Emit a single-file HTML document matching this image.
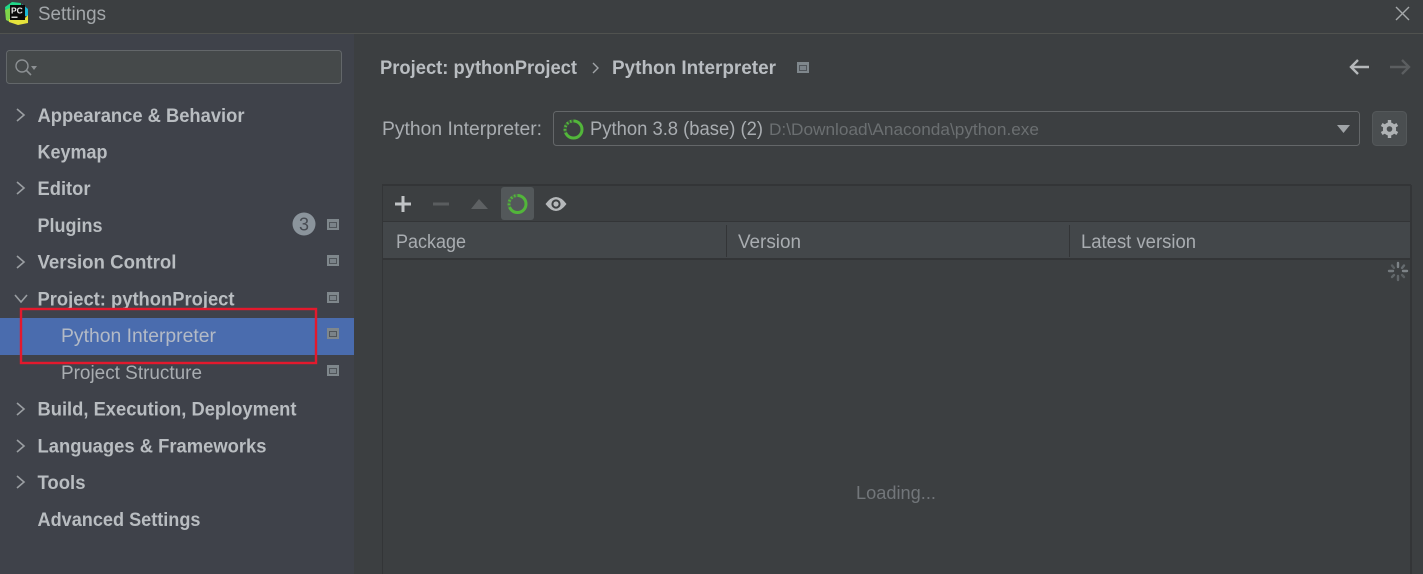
<!DOCTYPE html>
<html><head><meta charset="utf-8"><title>Settings</title>
<style>
html,body{margin:0;padding:0;background:#3c3f41;overflow:hidden}
svg{display:block;filter:blur(.35px)}
text{font-family:"Liberation Sans",sans-serif}
.b{font-weight:700;font-size:19px;fill:#b9bdc1}
.r{font-size:19px;fill:#a9adb1}
</style></head><body>
<svg width="1423" height="574" viewBox="0 0 1423 574" xmlns="http://www.w3.org/2000/svg">
<defs>
<g id="sq"><rect x="0" y="-1" width="12" height="11" fill="#7f878c"/><rect x="2" y="2" width="8" height="6" fill="#50555a"/><rect x="3" y="3" width="6" height="4" fill="#7a8288"/></g>
</defs>
<rect width="1423" height="574" fill="#3c3f41"/>
<rect x="0" y="33" width="1423" height="1" fill="#50524f"/>
<rect x="0" y="34" width="354" height="540" fill="#3f424a"/>
<!-- logo -->
<g>
<path d="M5 7 L12 2 L21 3 L21 8 L10 12 L10 20 L6 19 Z" fill="#21d789"/>
<path d="M5 10 L10 8 L10 22 L6 20 Z" fill="#7fd44a"/>
<path d="M22 4 L28 9 L28 16 L24 16 Z" fill="#19b8d8"/>
<path d="M9 19 L25 18 L28 15 L28 23 L18 25 L9 22 Z" fill="#e6e33c"/>
<rect x="10" y="5" width="15" height="15" fill="#0b0b0b"/>
<text x="11" y="13.5" style="font-size:8.5px;font-weight:700;fill:#e8e8e8">PC</text>
<rect x="11.5" y="16.5" width="6" height="1.5" fill="#d0d0d0"/>
</g>
<text x="38" y="20" textLength="68" lengthAdjust="spacingAndGlyphs" style="font-size:19px;fill:#a3a7aa">Settings</text>
<path d="M1396 7 L1409 20 M1409 7 L1396 20" stroke="#a5a8aa" stroke-width="1.4" fill="none"/>
<!-- search -->
<rect x="6.5" y="50.5" width="335" height="33" rx="3" fill="#45494a" stroke="#63676a"/>
<circle cx="22" cy="66" r="6" fill="none" stroke="#8c9093" stroke-width="1.4"/>
<path d="M26.5 70.5 L31 75" stroke="#8c9093" stroke-width="1.6"/>
<path d="M31 66 L37 66 L34 70 Z" fill="#8c9093"/>
<!-- sidebar chevrons -->
<g fill="none" stroke="#9a9ea2" stroke-width="1.6">
<path d="M17 109 L24 115 L17 121"/>
<path d="M17 182 L24 188 L17 194"/>
<path d="M17 256 L24 262 L17 268"/>
<path d="M15 295 L21 302 L27 295"/>
<path d="M17 403 L24 409 L17 415"/>
<path d="M17 440 L24 446 L17 452"/>
<path d="M17 476 L24 482 L17 488"/>
</g>
<!-- selected row -->
<rect x="0" y="318" width="354" height="37" fill="#4a6cae"/>
<!-- sidebar text -->
<text class="b" x="37.5" y="122" textLength="207" lengthAdjust="spacingAndGlyphs">Appearance &amp; Behavior</text>
<text class="b" x="37.5" y="158.5" textLength="70" lengthAdjust="spacingAndGlyphs">Keymap</text>
<text class="b" x="37.5" y="195" textLength="53" lengthAdjust="spacingAndGlyphs">Editor</text>
<text class="b" x="37.5" y="232" textLength="65" lengthAdjust="spacingAndGlyphs">Plugins</text>
<text class="b" x="37.5" y="268.5" textLength="139" lengthAdjust="spacingAndGlyphs">Version Control</text>
<text class="b" x="37.5" y="305.5" textLength="197" lengthAdjust="spacingAndGlyphs">Project: pythonProject</text>
<text class="r" x="61" y="342" textLength="155" lengthAdjust="spacingAndGlyphs" style="fill:#b3bac6">Python Interpreter</text>
<text class="r" x="61" y="379" textLength="141" lengthAdjust="spacingAndGlyphs">Project Structure</text>
<text class="b" x="37.5" y="415.5" textLength="259" lengthAdjust="spacingAndGlyphs">Build, Execution, Deployment</text>
<text class="b" x="37.5" y="452.5" textLength="229" lengthAdjust="spacingAndGlyphs">Languages &amp; Frameworks</text>
<text class="b" x="37.5" y="489" textLength="48" lengthAdjust="spacingAndGlyphs">Tools</text>
<text class="b" x="37.5" y="526" textLength="163" lengthAdjust="spacingAndGlyphs">Advanced Settings</text>
<!-- badge -->
<circle cx="304" cy="224" r="11.5" fill="#8b949c"/>
<text x="304" y="230.5" text-anchor="middle" style="font-size:18px;fill:#474b52">3</text>
<use href="#sq" x="327" y="220"/>
<use href="#sq" x="327" y="256"/>
<use href="#sq" x="327" y="293"/>
<use href="#sq" x="327" y="329"/>
<use href="#sq" x="327" y="366"/>
<!-- red box -->
<rect x="21" y="309" width="295" height="54" fill="none" stroke="#e3192d" stroke-width="2.4"/>
<!-- breadcrumb -->
<text class="b" x="380" y="74" textLength="197" lengthAdjust="spacingAndGlyphs">Project: pythonProject</text>
<path d="M593 63 L598 68 L593 73" fill="none" stroke="#a0a4a7" stroke-width="1.4"/>
<text class="b" x="612" y="74" textLength="164" lengthAdjust="spacingAndGlyphs">Python Interpreter</text>
<use href="#sq" x="797" y="63"/>
<path d="M1369 67 L1352 67 M1358 60 L1351 67 L1358 74" fill="none" stroke="#b5b8ba" stroke-width="2.4"/>
<path d="M1390 67 L1408 67 M1402 60 L1409 67 L1402 74" fill="none" stroke="#5b5e60" stroke-width="2.4"/>
<!-- interpreter row -->
<text class="r" x="382" y="135" textLength="160" lengthAdjust="spacingAndGlyphs">Python Interpreter:</text>
<rect x="553.5" y="111.5" width="806" height="34" rx="3" fill="#3c3f41" stroke="#646769"/>
<circle cx="573.5" cy="129.5" r="8.5" fill="none" stroke="#52b63a" stroke-width="3"/>
<path d="M573.5 121 A8.5 8.5 0 0 0 566 133.5" fill="none" stroke="#3c3f41" stroke-width="3.2" stroke-dasharray="2 1.6" opacity=".75"/>
<text class="r" x="590" y="135" textLength="173" lengthAdjust="spacingAndGlyphs">Python 3.8 (base) (2)</text>
<text x="769" y="135" textLength="270" lengthAdjust="spacingAndGlyphs" style="font-size:17px;fill:#6b6f71">D:\Download\Anaconda\python.exe</text>
<path d="M1337 125 L1350 125 L1343.5 133 Z" fill="#a0a4a7"/>
<rect x="1372.5" y="111.5" width="34" height="34" rx="4" fill="#4a4e50" stroke="#54585a"/>
<g fill="#afb2b4">
<circle cx="1389.5" cy="129" r="6.6"/>
<g stroke="#afb2b4" stroke-width="3.4">
<path d="M1389.5 120 V138"/>
<path d="M1381.7 124.5 L1397.3 133.5"/>
<path d="M1381.7 133.5 L1397.3 124.5"/>
</g>
<circle cx="1389.5" cy="129" r="2.8" fill="#4a4e50"/>
</g>
<!-- table -->
<rect x="382" y="185" width="1041" height="389" fill="#3c3f41"/>
<rect x="382" y="184" width="1029" height="2" fill="#333537"/>
<rect x="382" y="185" width="1" height="389" fill="#333537"/>
<rect x="1410" y="185" width="2" height="389" fill="#333537"/>
<rect x="383" y="221" width="1027" height="1.5" fill="#333537"/>
<rect x="383" y="222" width="1027" height="36" fill="#43474a"/>
<rect x="383" y="258" width="1027" height="2" fill="#333537"/>
<rect x="726" y="225" width="1" height="32" fill="#333537"/>
<rect x="1069" y="225" width="1" height="32" fill="#333537"/>
<text class="r" x="396" y="248" textLength="70" lengthAdjust="spacingAndGlyphs">Package</text>
<text class="r" x="738" y="248" textLength="63" lengthAdjust="spacingAndGlyphs">Version</text>
<text class="r" x="1081" y="248" textLength="115" lengthAdjust="spacingAndGlyphs">Latest version</text>
<!-- toolbar -->
<path d="M395 204 H411 M403 196 V212" stroke="#c0c3c5" stroke-width="3"/>
<path d="M433 204 H449" stroke="#5a5d5f" stroke-width="3"/>
<path d="M471 209 L479 199 L488 209 Z" fill="#5e6163"/>
<rect x="501" y="187" width="33" height="33" rx="3" fill="#53585a"/>
<circle cx="517.5" cy="204" r="8.5" fill="none" stroke="#52b63a" stroke-width="3"/>
<path d="M517.5 195.5 A8.5 8.5 0 0 0 510 208" fill="none" stroke="#53585a" stroke-width="3.2" stroke-dasharray="2 1.6" opacity=".75"/>
<path d="M545.5 204 Q556 190 566.5 204 Q556 218 545.5 204 Z" fill="#b5b8ba"/>
<circle cx="556" cy="204" r="4.6" fill="#3c3f41"/>
<circle cx="556" cy="204" r="2.6" fill="#b5b8ba"/>
<!-- spinner -->
<g stroke-width="2.4" stroke-linecap="round" fill="none">
<path d="M1398 263 V267" stroke="#7d8387"/>
<path d="M1404 265.5 L1402 268" stroke="#666c70"/>
<path d="M1407 271 H1403" stroke="#7d8387"/>
<path d="M1404 277 L1402 275" stroke="#5b6063"/>
<path d="M1398 280 V276" stroke="#62676a"/>
<path d="M1392 277 L1394 275" stroke="#62676a"/>
<path d="M1389 271 H1393" stroke="#73797d"/>
<path d="M1392 265.5 L1394 268" stroke="#5b6063"/>
</g>
<text x="856" y="499" textLength="80" lengthAdjust="spacingAndGlyphs" style="font-size:18px;fill:#72767a">Loading...</text>
</svg>
</body></html>
